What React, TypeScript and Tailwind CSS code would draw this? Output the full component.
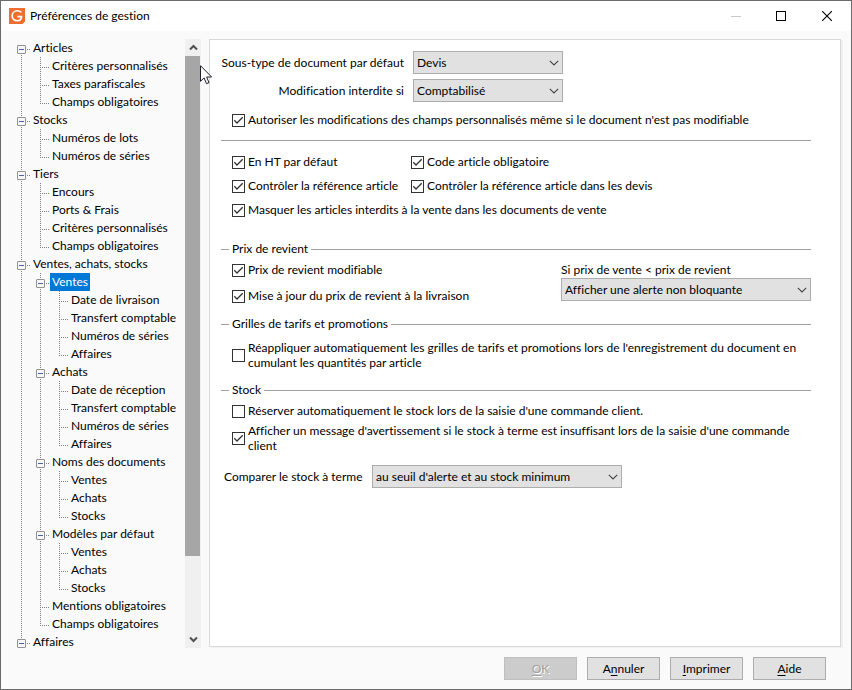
import { useState } from 'react';
import type { ReactNode } from 'react';
import clsx from 'clsx';

interface TreeNode {
    label: string;
    children?: TreeNode[];
}

const TREE: TreeNode[] = [
    {
        label: 'Articles',
        children: [{ label: 'Critères personnalisés' }, { label: 'Taxes parafiscales' }, { label: 'Champs obligatoires' }],
    },
    { label: 'Stocks', children: [{ label: 'Numéros de lots' }, { label: 'Numéros de séries' }] },
    {
        label: 'Tiers',
        children: [
            { label: 'Encours' },
            { label: 'Ports & Frais' },
            { label: 'Critères personnalisés' },
            { label: 'Champs obligatoires' },
        ],
    },
    {
        label: 'Ventes, achats, stocks',
        children: [
            {
                label: 'Ventes',
                children: [
                    { label: 'Date de livraison' },
                    { label: 'Transfert comptable' },
                    { label: 'Numéros de séries' },
                    { label: 'Affaires' },
                ],
            },
            {
                label: 'Achats',
                children: [
                    { label: 'Date de réception' },
                    { label: 'Transfert comptable' },
                    { label: 'Numéros de séries' },
                    { label: 'Affaires' },
                ],
            },
            { label: 'Noms des documents', children: [{ label: 'Ventes' }, { label: 'Achats' }, { label: 'Stocks' }] },
            { label: 'Modèles par défaut', children: [{ label: 'Ventes' }, { label: 'Achats' }, { label: 'Stocks' }] },
            { label: 'Mentions obligatoires' },
            { label: 'Champs obligatoires' },
        ],
    },
    { label: 'Affaires', children: [] },
];

/** Dotted connector for one indent level of a tree row. */
const Guide = ({ up, down, branch }: { up: boolean; down: boolean; branch: boolean }) => (
    <svg width="19" height="18" viewBox="0 0 19 18" className="block shrink-0" shapeRendering="crispEdges" aria-hidden="true">
        <g stroke="#808080" strokeWidth="1" strokeDasharray="1 1">
            {up && <path d="M9.5 0V11" />}
            {down && <path d="M9.5 10V18" />}
            {branch && <path d="M9 10.5H18" />}
        </g>
    </svg>
);

const TreeItem = ({ node, path, lines, first, last, selected, onSelect }: {
    node: TreeNode;
    path: string;
    lines: boolean[];
    first: boolean;
    last: boolean;
    selected: string;
    onSelect: (path: string) => void;
}) => {
    const [open, setOpen] = useState(true);
    const isSelected = selected === path;

    return (
        <li role="treeitem" aria-expanded={node.children ? open : undefined} aria-selected={isSelected}>
            <div className="flex h-[18px] items-center">
                {lines.map((line, i) => (
                    <Guide key={i} up={line} down={line} branch={false} />
                ))}
                {node.children ? (
                    <button
                        className="relative shrink-0"
                        onClick={() => setOpen(!open)}
                        aria-label={open ? `Réduire ${node.label}` : `Développer ${node.label}`}
                    >
                        <Guide up={!first} down={!last} branch />
                        <svg width="19" height="18" viewBox="0 0 19 18" className="absolute inset-0" aria-hidden="true">
                            <rect x="5.5" y="6.5" width="8" height="8" rx="0.5" fill="#f7f7f7" stroke="#919191" />
                            <path d="M7 10.5h5" stroke="#4b63a7" />
                            {!open && <path d="M9.5 8v5" stroke="#4b63a7" />}
                        </svg>
                    </button>
                ) : (
                    <Guide up down={!last} branch />
                )}
                <button
                    className={clsx('h-[18px] px-[2px] leading-3 whitespace-nowrap', isSelected && 'bg-[#0078d7] text-white')}
                    onClick={() => onSelect(path)}
                >
                    {node.label}
                </button>
            </div>
            {open && node.children && node.children.length > 0 && (
                <ul role="group">
                    {node.children.map((child, i) => (
                        <TreeItem
                            key={child.label}
                            node={child}
                            path={`${path}/${child.label}`}
                            lines={[...lines, !last]}
                            first={false}
                            last={i === node.children!.length - 1}
                            selected={selected}
                            onSelect={onSelect}
                        />
                    ))}
                </ul>
            )}
        </li>
    );
};

const ScrollBar = () => (
    <div className="flex w-4 shrink-0 flex-col bg-[#f0f0f0]">
        <button className="flex h-[17px] items-center justify-center" aria-label="Défiler vers le haut">
            <svg width="9" height="7" viewBox="0 0 9 7" fill="none" stroke="#505050" strokeWidth="2">
                <path d="M1 5.5 4.5 2 8 5.5" />
            </svg>
        </button>
        <div className="flex-1 pr-px">
            <div className="h-[87%] bg-[#a6a6a6]" />
        </div>
        <button className="flex h-[17px] items-center justify-center" aria-label="Défiler vers le bas">
            <svg width="9" height="7" viewBox="0 0 9 7" fill="none" stroke="#505050" strokeWidth="2">
                <path d="M1 1.5 4.5 5 8 1.5" />
            </svg>
        </button>
    </div>
);

const Check = ({ children, checked, className }: { children: ReactNode; checked?: boolean; className?: string }) => (
    <label className={clsx('flex items-center gap-[3px] whitespace-nowrap', className)}>
        <span className="relative block size-[13px] shrink-0">
            <input
                type="checkbox"
                defaultChecked={checked}
                className="peer block size-[13px] appearance-none border border-[#333333] bg-white"
            />
            <svg
                width="13"
                height="13"
                viewBox="0 0 13 13"
                fill="none"
                stroke="#333333"
                strokeWidth="1.3"
                className="pointer-events-none absolute inset-0 hidden peer-checked:block"
            >
                <path d="M2.3 6.3 5 9 10.7 3.3" />
            </svg>
        </span>
        <span>{children}</span>
    </label>
);

const Select = ({ id, options, className }: { id: string; options: string[]; className: string }) => (
    <div className={clsx('relative', className)}>
        <select id={id} className="block h-[23px] w-full appearance-none border border-[#adadad] bg-[#e1e1e1] pl-[3px] pr-5 leading-4">
            {options.map(o => (
                <option key={o}>{o}</option>
            ))}
        </select>
        <svg
            width="10"
            height="6"
            viewBox="0 0 10 6"
            fill="none"
            stroke="#444444"
            strokeWidth="1.1"
            className="pointer-events-none absolute right-1 top-[9px]"
        >
            <path d="M0.8 0.8 5 5 9.2 0.8" />
        </svg>
    </div>
);

const Group = ({ title, className, children }: { title: string; className: string; children: ReactNode }) => (
    <fieldset className={clsx('min-w-0 border-t border-[#a0a0a0]', className)}>
        <legend className="ml-2 px-[3px] leading-4">{title}</legend>
        {children}
    </fieldset>
);

const DialogButton = ({ hotkey, before = '', after, disabled }: {
    hotkey: string;
    before?: string;
    after: string;
    disabled?: boolean;
}) => (
    <button
        disabled={disabled}
        className={clsx(
            'h-[23px] w-[73px] border leading-4',
            disabled ? 'border-[#bfbfbf] bg-[#cccccc] text-[#a0a0a0] [text-shadow:1px_1px_0_#ffffff]' : 'border-[#adadad] bg-[#e1e1e1]'
        )}
    >
        {before}
        <span className="underline underline-offset-2">{hotkey}</span>
        {after}
    </button>
);

const TitleBar = () => (
    <header className="flex h-[30px] shrink-0 items-center bg-white pl-2">
        <svg width="16" height="16" viewBox="0 0 16 16" aria-hidden="true">
            <path d="M0 0h16v13.5L13.5 16H0z" fill="#ee6f2d" />
            <path
                d="M12.4 4.4C11.3 3.3 10 2.8 8.3 2.8 5.3 2.8 3.2 4.9 3.2 7.8s2.1 4.9 5 4.9c2.4 0 4.2-1.5 4.4-4.1H8.4"
                fill="none"
                stroke="#ffffff"
                strokeWidth="1.6"
            />
        </svg>
        <h1 className="flex-1 pl-[5px]">Préférences de gestion</h1>
        <button className="flex h-full w-[46px] items-center justify-center" aria-label="Réduire" disabled>
            <svg width="10" height="10" viewBox="0 0 10 10" stroke="#c8c8c8">
                <path d="M0 5.5h10" />
            </svg>
        </button>
        <button className="flex h-full w-11 items-center justify-center" aria-label="Agrandir">
            <svg width="10" height="10" viewBox="0 0 10 10" fill="none" stroke="#000000">
                <rect x="0.5" y="0.5" width="9" height="9" />
            </svg>
        </button>
        <button className="flex h-full w-12 items-center justify-center" aria-label="Fermer">
            <svg width="10" height="10" viewBox="0 0 10 10" stroke="#000000" strokeWidth="1.1">
                <path d="M0 0 10 10M10 0 0 10" />
            </svg>
        </button>
    </header>
);

const SalesPreferences = () => (
    <form className="mb-px min-w-0 flex-1 border border-[#d9d9d9] bg-white pt-[11px] pr-[29px] pl-[11px] shadow-[2px_1px_0_#f0f0f0]">
        <div className="grid grid-cols-[183px_150px] items-center gap-x-[9px] gap-y-[5px] whitespace-nowrap">
            <label htmlFor="subtype" className="justify-self-end">Sous-type de document par défaut</label>
            <Select id="subtype" options={['Devis', 'Commande', 'Facture']} className="w-full" />
            <label htmlFor="locked" className="justify-self-end">Modification interdite si</label>
            <Select id="locked" options={['Comptabilisé', 'Imprimé']} className="w-full" />
        </div>
        <Check checked className="mt-[10px] ml-[11px]">
            Autoriser les modifications des champs personnalisés même si le document n'est pas modifiable
        </Check>

        <hr className="mt-3 border-[#a0a0a0]" />

        <div className="mt-[13px] ml-[11px] grid grid-cols-[179px_1fr] gap-y-2">
            <Check checked>En HT par défaut</Check>
            <Check checked>Code article obligatoire</Check>
            <Check checked>Contrôler la référence article</Check>
            <Check checked>Contrôler la référence article dans les devis</Check>
            <Check checked className="col-span-2">Masquer les articles interdits à la vente dans les documents de vente</Check>
        </div>

        <Group title="Prix de revient" className="mt-[23px]">
            <div className="flex justify-between pt-[5px] pl-[11px]">
                <div className="flex flex-col gap-[10px]">
                    <Check checked>Prix de revient modifiable</Check>
                    <Check checked>Mise à jour du prix de revient à la livraison</Check>
                </div>
                <div className="w-[250px]">
                    <label htmlFor="margin" className="block">Si prix de vente &lt; prix de revient</label>
                    <Select id="margin" options={['Afficher une alerte non bloquante', 'Ne rien faire']} className="w-full" />
                </div>
            </div>
        </Group>

        <Group title="Grilles de tarifs et promotions" className="mt-3">
            <Check className="mt-2 ml-[11px] leading-[15px]">
                Réappliquer automatiquement les grilles de tarifs et promotions lors de l'enregistrement du document en
                <br />
                cumulant les quantités par article
            </Check>
        </Group>

        <Group title="Stock" className="mt-3">
            <Check className="mt-[5px] ml-[11px]">Réserver automatiquement le stock lors de la saisie d'une commande client.</Check>
            <Check checked className="mt-1 ml-[11px] leading-[15px]">
                Afficher un message d'avertissement si le stock à terme est insuffisant lors de la saisie d'une commande
                <br />
                client
            </Check>
            <div className="mt-3 flex items-center pl-[3px]">
                <label htmlFor="compare" className="w-[148px] whitespace-nowrap">Comparer le stock à terme</label>
                <Select id="compare" options={["au seuil d'alerte et au stock minimum", 'au stock minimum']} className="w-[250px]" />
            </div>
        </Group>
    </form>
);

export default function App() {
    const [selected, setSelected] = useState('Ventes, achats, stocks/Ventes');

    return (
        <div className="relative flex h-screen flex-col border border-[#6b6b6b] bg-[#fafafa] font-['Lato','Open_Sans',sans-serif] text-[12px] leading-4 text-black [font-variant-ligatures:none]">
            <TitleBar />

            <main className="flex min-h-0 flex-1 pt-2 pr-[10px] pl-[11px]">
                <nav className="flex w-[189px] shrink-0" aria-label="Rubriques">
                    <ul role="tree" className="min-w-0 flex-1 overflow-hidden">
                        {TREE.map((node, i) => (
                            <TreeItem
                                key={node.label}
                                node={node}
                                path={node.label}
                                lines={[]}
                                first={i === 0}
                                last={i === TREE.length - 1}
                                selected={selected}
                                onSelect={setSelected}
                            />
                        ))}
                    </ul>
                    <ScrollBar />
                </nav>
                <div className="w-2 shrink-0" />
                <SalesPreferences />
            </main>

            <footer className="flex shrink-0 justify-end gap-[10px] pt-[9px] pr-[25px] pb-[9px]">
                <DialogButton hotkey="O" after="K" disabled />
                <DialogButton before="A" hotkey="n" after="nuler" />
                <DialogButton hotkey="I" after="mprimer" />
                <DialogButton hotkey="A" after="ide" />
            </footer>

            {/* Mouse pointer */}
            <svg width="13" height="20" viewBox="0 0 13 20" className="pointer-events-none absolute top-16 left-[199px]" aria-hidden="true">
                <path d="M0.5 0.7v15.6l3.6-3.4 2.4 5.8 2.5-1-2.4-5.7h5z" fill="#ffffff" stroke="#1e1e28" />
            </svg>
        </div>
    );
}
